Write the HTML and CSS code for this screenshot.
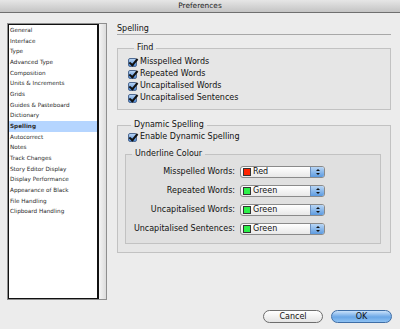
FILE: index.html
```html
<html>

<head>
	<title>
		Preferences
	</title>

	<link rel="stylesheet" href="styles.css">
</head>

<body>
	<div class="titlebar">Preferences</div>

	<div class="window">
		<div class="sidebar">
			<ul class="list">
				<li>General</li>
				<li>Interface</li>
				<li>Type</li>
				<li>Advanced Type</li>
				<li>Composition</li>
				<li>Units &amp; Increments</li>
				<li>Grids</li>
				<li>Guides &amp; Pasteboard</li>
				<li>Dictionary</li>
				<li class="selected">Spelling</li>
				<li>Autocorrect</li>
				<li>Notes</li>
				<li>Track Changes</li>
				<li>Story Editor Display</li>
				<li>Display Performance</li>
				<li>Appearance of Black</li>
				<li>File Handling</li>
				<li>Clipboard Handling</li>
			</ul>
			<div class="scroll"></div>
		</div>

		<div class="panel">
			<div class="panel-title">Spelling</div>

			<fieldset class="group find">
				<legend>Find</legend>
				<label class="check"><span class="box"></span>Misspelled Words</label>
				<label class="check"><span class="box"></span>Repeated Words</label>
				<label class="check"><span class="box"></span>Uncapitalised Words</label>
				<label class="check"><span class="box"></span>Uncapitalised Sentences</label>
			</fieldset>

			<fieldset class="group dynamic">
				<legend>Dynamic Spelling</legend>
				<label class="check enable"><span class="box"></span>Enable Dynamic Spelling</label>

				<fieldset class="group underline">
					<legend>Underline Colour</legend>
					<div class="colours">
						<div class="colour-label">Misspelled Words:</div>
						<div class="popup"><span class="swatch red"></span>Red<span class="arrows"></span></div>

						<div class="colour-label">Repeated Words:</div>
						<div class="popup"><span class="swatch green"></span>Green<span class="arrows"></span></div>

						<div class="colour-label">Uncapitalised Words:</div>
						<div class="popup"><span class="swatch green"></span>Green<span class="arrows"></span></div>

						<div class="colour-label">Uncapitalised Sentences:</div>
						<div class="popup"><span class="swatch green"></span>Green<span class="arrows"></span></div>
					</div>
				</fieldset>
			</fieldset>
		</div>
	</div>

	<div class="footer">
		<button class="button cancel">Cancel</button>
		<button class="button ok">OK</button>
	</div>
</body>

</html>
```

FILE: styles.css
```css
html,
body {
	margin: 0px;
	padding: 0px;
	width: 100%;
	height: 100%;
}

body {
	background-color: #ececec;
	font-family: "DejaVu Sans", sans-serif;
	font-size: 8px;
	color: #111;
}

.titlebar {
	height: 12px;
	line-height: 12px;
	font-size: 7.4px;
	text-align: center;
	color: #222;
	background: linear-gradient(to bottom, #e6e6e6, #c4c4c4);
	border-bottom: 1px solid #6f6f6f;
}

.window {
	display: flex;
	align-items: flex-start;
	padding-top: 10px;
	padding-left: 7px;
}

.sidebar {
	display: flex;
	width: 98px;
	height: 275px;
	border: 1px solid #8e8e8e;
}

.list {
	flex: 1;
	margin: 0px;
	padding: 0px;
	list-style: none;
	background-color: #fff;
	border: 1px solid #111;
	border-right-width: 2px;
	font-size: 5.7px;
	color: #2a2a2a;
}

.list li {
	height: 10.67px;
	line-height: 10.67px;
	padding-left: 1px;
	white-space: nowrap;
}

.list li.selected {
	background-color: #b5d5ff;
	font-weight: bold;
}

.scroll {
	width: 7px;
	background: linear-gradient(to right, #f4f4f4, #dcdcdc);
}

.panel {
	width: 274px;
	margin-left: 10px;
}

.panel-title {
	line-height: 11px;
	border-bottom: 1px solid #a8a8a8;
	margin-bottom: 8px;
}

.group {
	margin: 0px;
	border: 1px solid #c2c2c2;
	background-color: rgba(0, 0, 0, 0.025);
}

.group legend {
	margin-left: 6px;
	padding: 0px 3px;
	line-height: 10px;
}

.find {
	padding: 3px 0px 5px 10px;
}

.check {
	display: flex;
	align-items: center;
	height: 12px;
	line-height: 12px;
}

.box {
	width: 9px;
	height: 9px;
	margin-right: 3px;
	border: 1px solid #4f6a92;
	border-radius: 2px;
	box-sizing: border-box;
	background: linear-gradient(to bottom, #b7d3f3, #4d8ad6);
	position: relative;
}

.box::after {
	content: "";
	position: absolute;
	left: 2px;
	top: -2px;
	width: 3px;
	height: 7px;
	border-right: 2px solid #111;
	border-bottom: 2px solid #111;
	transform: rotate(40deg);
}

.dynamic {
	margin-top: 10px;
	padding: 1px 9px 8px 7px;
}

.enable {
	margin-left: 3px;
}

.underline {
	margin-top: 6px;
	padding: 3px 0px 5px 0px;
}

.colours {
	display: grid;
	grid-template-columns: 109px 85px;
	grid-auto-rows: 19px;
	column-gap: 5px;
	align-items: center;
}

.colour-label {
	text-align: right;
	white-space: nowrap;
}

.popup {
	display: flex;
	align-items: center;
	height: 12px;
	border: 1px solid #8a8a8a;
	border-radius: 3px;
	box-sizing: border-box;
	background: linear-gradient(to bottom, #ffffff, #e8e8e8);
	overflow: hidden;
}

.swatch {
	width: 8px;
	height: 8px;
	margin: 0px 2px 0px 2px;
	border: 1px solid #333;
	box-sizing: border-box;
}

.swatch.red {
	background-color: #ff2400;
}

.swatch.green {
	background-color: #2df04a;
}

.arrows {
	margin-left: auto;
	width: 13px;
	height: 100%;
	background: linear-gradient(to bottom, #b9d6f5, #5d9be0);
	border-left: 1px solid #6a8fbf;
	position: relative;
}

.arrows::before,
.arrows::after {
	content: "";
	position: absolute;
	left: 5px;
	border-left: 2px solid transparent;
	border-right: 2px solid transparent;
}

.arrows::before {
	top: 2px;
	border-bottom: 2px solid #111;
}

.arrows::after {
	bottom: 2px;
	border-top: 2px solid #111;
}

.footer {
	display: flex;
	justify-content: flex-end;
	gap: 8px;
	margin-top: 10px;
	padding-right: 8px;
}

.button {
	height: 13px;
	padding: 0px;
	font-family: "DejaVu Sans", sans-serif;
	font-size: 8px;
	line-height: 11px;
	color: #111;
	border-radius: 7px;
	border: 1px solid #6d6d6d;
	background: linear-gradient(to bottom, #ffffff, #e4e4e4);
}

.cancel {
	width: 60px;
}

.ok {
	width: 61px;
	border-color: #3f6ea6;
	background: linear-gradient(to bottom, #c9e1fa, #6aa6e6 55%, #8ec2f3);
}
```
